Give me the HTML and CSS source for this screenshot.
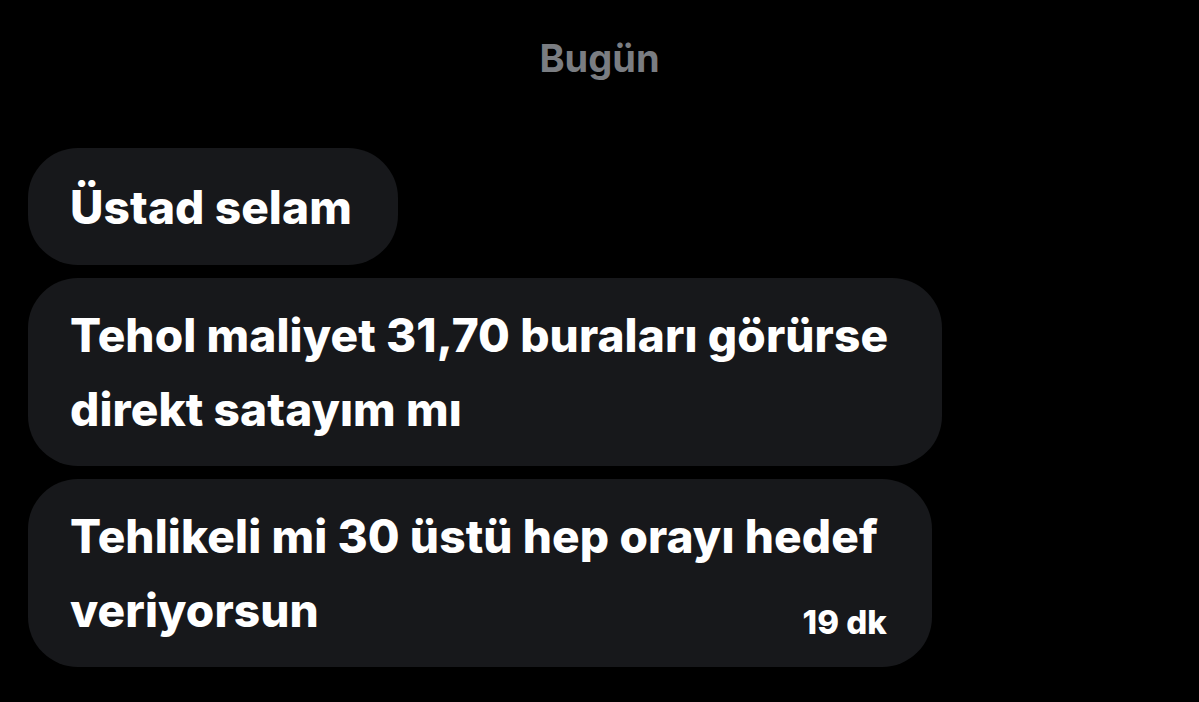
FILE: index.html
```html
<!DOCTYPE html>
<html lang="tr">
<head>
    <meta charset="UTF-8">
    <meta name="viewport" content="width=device-width, initial-scale=1.0">
    <title>Mesajlar</title>
    <link rel="stylesheet" href="styles.css">
</head>
<body>

<div class="chat">
    <div class="day-label">Bugün</div>

    <div class="messages">
        <div class="bubble">
            <p>Üstad selam</p>
        </div>
        <div class="bubble multi">
            <p>Tehol maliyet 31,70 buraları görürse<br>direkt satayım mı</p>
        </div>
        <div class="bubble multi">
            <p>Tehlikeli mi 30 üstü hep orayı hedef<br>veriyorsun</p>
            <span class="time">19 dk</span>
        </div>
    </div>
</div>

</body>
</html>
```

FILE: styles.css
```css
body {
    margin: 0;
    padding: 0;
    background-color: #000;
    font-family: Inter, "Noto Sans", sans-serif;
    color: #fff;
}
.chat {
    width: 1199px;
    height: 702px;
    padding: 0 28px;
    box-sizing: border-box;
    overflow: hidden;
}
.day-label {
    text-align: center;
    color: #7a7d82;
    font-size: 38px;
    font-weight: 700;
    line-height: 44px;
    padding-top: 36px; /* space above the date */
    margin-bottom: 68px;
}
.messages {
    display: flex;
    flex-direction: column;
    align-items: flex-start;
    gap: 13px; /* spacing between bubbles */
}
.bubble {
    position: relative;
    display: flex;
    flex-direction: column;
    justify-content: center;
    min-height: 117px;
    box-sizing: border-box;
    background-color: #17181b;
    border-radius: 50px;
    padding: 20px 46px 20px 42px;
}
.bubble.multi {
    padding-right: 54px; /* wrapped bubbles stretch a bit wider */
}
.bubble p {
    margin: 0;
    font-size: 46px;
    font-weight: 800;
    line-height: 74px;
    letter-spacing: 0.1px;
}
.bubble .time {
    position: absolute;
    right: 45px;
    bottom: 27px;
    font-size: 33px;
    font-weight: 800;
    line-height: 36px;
}
```
